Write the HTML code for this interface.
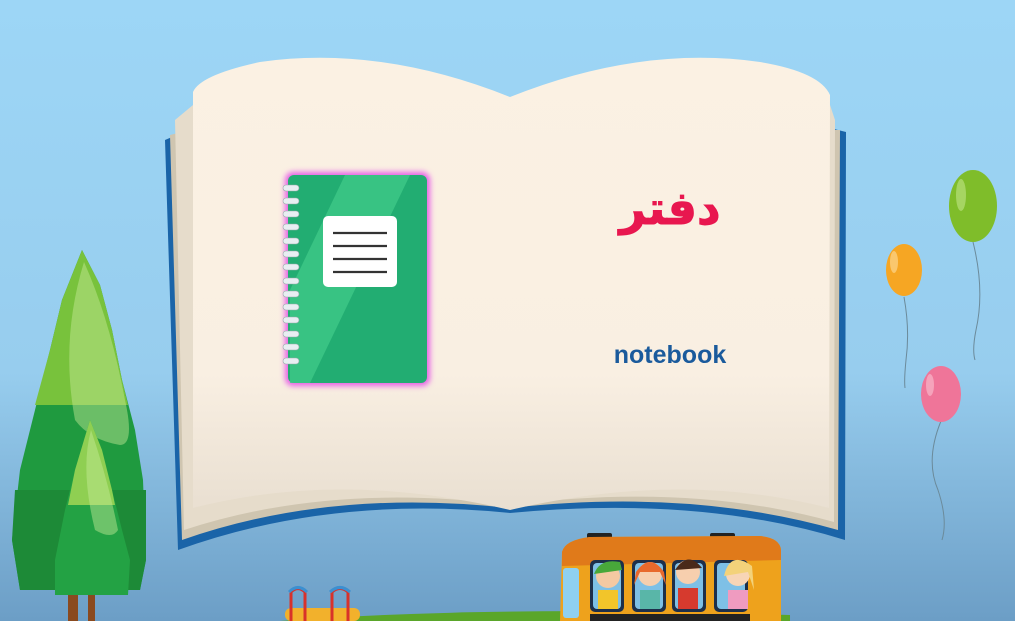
<!DOCTYPE html>
<html><head><meta charset="utf-8"><style>
html,body{margin:0;padding:0;width:1015px;height:621px;overflow:hidden}
svg{display:block}
</style></head><body>
<svg width="1015" height="621" viewBox="0 0 1015 621" xmlns="http://www.w3.org/2000/svg">
<defs>
<linearGradient id="sky" x1="0" y1="0" x2="0" y2="1">
<stop offset="0" stop-color="#9dd6f6"/><stop offset="0.6" stop-color="#97cdee"/><stop offset="1" stop-color="#6c9ec6"/>
</linearGradient>
<linearGradient id="page" x1="0" y1="0" x2="0" y2="1">
<stop offset="0" stop-color="#fbf1e3"/><stop offset="0.7" stop-color="#f9efe2"/><stop offset="1" stop-color="#e9dfd1"/>
</linearGradient>
<filter id="glow" x="-20%" y="-20%" width="140%" height="140%"><feGaussianBlur stdDeviation="3"/></filter>
</defs>
<rect width="1015" height="621" fill="url(#sky)"/>

<path d="M165 140 L193 128 L510 120 L830 128 L846 132 L845 540 Q700 495 510 513 Q330 495 178 550 Z" fill="#1a64a8"/>
<path d="M170 135 L190 130 L830 130 L840 130 L838 530 Q690 488 510 508 Q330 488 182 540 Z" fill="#cfc5b0"/>
<path d="M175 120 L193 105 L830 105 L835 120 L834 522 Q690 482 510 505 Q330 482 184 530 Z" fill="#e6dccb"/>
<path d="M193 92 Q200 75 260 62 Q380 45 510 97 Q640 45 760 62 Q820 72 830 95 L829 508 Q680 470 510 510 Q340 470 193 508 Z" fill="url(#page)"/>

<rect x="285" y="172" width="145" height="214" rx="8" fill="#e65ee6" filter="url(#glow)"/>
<rect x="288" y="175" width="139" height="208" rx="6" fill="#22ad72"/>
<path d="M345 175 L410 175 L310 383 L290 383 L290 290 Z" fill="#3ec887" opacity="0.8"/>
<rect x="323" y="216" width="74" height="71" rx="5" fill="#ffffff"/>
<g stroke="#333" stroke-width="2.2"><line x1="333" y1="233" x2="387" y2="233"/><line x1="333" y1="246" x2="387" y2="246"/><line x1="333" y1="259" x2="387" y2="259"/><line x1="333" y1="272" x2="387" y2="272"/></g>
<g fill="#e8eef2" stroke="#9aa" stroke-width="0.6">
<rect x="283" y="185" width="16" height="6" rx="3"/><rect x="283" y="198" width="16" height="6" rx="3"/><rect x="283" y="211" width="16" height="6" rx="3"/><rect x="283" y="224" width="16" height="6" rx="3"/><rect x="283" y="238" width="16" height="6" rx="3"/><rect x="283" y="251" width="16" height="6" rx="3"/><rect x="283" y="264" width="16" height="6" rx="3"/><rect x="283" y="278" width="16" height="6" rx="3"/><rect x="283" y="291" width="16" height="6" rx="3"/><rect x="283" y="304" width="16" height="6" rx="3"/><rect x="283" y="317" width="16" height="6" rx="3"/><rect x="283" y="331" width="16" height="6" rx="3"/><rect x="283" y="344" width="16" height="6" rx="3"/><rect x="283" y="358" width="16" height="6" rx="3"/>
</g>

<text x="670" y="224" text-anchor="middle" font-family="'DejaVu Sans','Noto Sans CJK SC',sans-serif" font-weight="bold" font-size="46" fill="#e8174f" stroke="#e8174f" stroke-width="1" direction="rtl">دفتر</text>
<text x="670" y="363" text-anchor="middle" font-family="'Liberation Sans',sans-serif" font-weight="bold" font-size="25" fill="#1a5a9c">notebook</text>

<g fill="none" stroke="#6b8a9a" stroke-width="1">
<path d="M973 242 Q985 290 976 330 Q972 350 975 360"/>
<path d="M904 297 Q910 330 906 360 Q904 380 905 388"/>
<path d="M941 421 Q925 460 938 490 Q948 520 942 540"/>
</g>
<ellipse cx="973" cy="206" rx="24" ry="36" fill="#7fbd2a"/>
<ellipse cx="961" cy="195" rx="5" ry="16" fill="#b6e07a" opacity="0.7"/>
<ellipse cx="904" cy="270" rx="18" ry="26" fill="#f6a623"/>
<ellipse cx="894" cy="262" rx="4" ry="11" fill="#fcd58d" opacity="0.7"/>
<ellipse cx="941" cy="394" rx="20" ry="28" fill="#ef7599"/>
<ellipse cx="930" cy="385" rx="4" ry="11" fill="#f8b6c9" opacity="0.7"/>

<path d="M280 621 Q500 605 790 615 L790 621 Z" fill="#5aa62a"/>

<rect x="68" y="585" width="10" height="36" fill="#8a4a1f"/>
<rect x="88" y="585" width="7" height="36" fill="#8a4a1f"/>
<path d="M82 250 L100 285 L112 330 L122 380 L135 430 L143 480 L146 560 L140 590 L20 590 L12 540 L20 470 L35 410 L50 350 L62 300 Z" fill="#1f9a3f"/>
<path d="M82 250 L100 285 L112 330 L122 380 L128 405 L35 405 L50 350 L62 300 Z" fill="#78c23c"/>
<path d="M15 490 L146 490 L146 560 L140 590 L20 590 L12 540 Z" fill="#1d8a37"/>
<path d="M84 262 Q110 320 125 400 Q135 445 120 445 Q90 440 75 420 Q60 340 84 262 Z" fill="#c8ec9a" opacity="0.45"/>
<path d="M90 420 L102 450 L112 490 L122 530 L130 560 L128 595 L55 595 L55 560 L65 510 L75 470 Z" fill="#23a244"/>
<path d="M90 420 L102 450 L112 490 L115 505 L68 505 L75 470 Z" fill="#8fcf52"/>
<path d="M91 430 Q108 480 118 530 Q112 540 95 530 Q80 470 91 430 Z" fill="#c8ec9a" opacity="0.45"/>

<rect x="285" y="608" width="75" height="13" rx="6" fill="#f2b12c"/>
<g fill="none" stroke-width="3"><path d="M291 621 L291 592 Q298 585 305 592 L305 621" stroke="#d8322a"/><path d="M332 621 L332 592 Q340 585 348 592 L348 621" stroke="#d8322a"/></g>
<path d="M289 592 Q298 583 307 592 M330 592 Q340 583 350 592" stroke="#3c8fd0" stroke-width="3" fill="none"/>

<rect x="587" y="533" width="25" height="6" rx="2" fill="#222"/>
<rect x="710" y="533" width="25" height="6" rx="2" fill="#222"/>
<path d="M562 552 Q565 540 590 537 L760 536 Q780 538 781 550 L781 621 L560 621 Z" fill="#eea21c"/>
<path d="M562 552 Q565 540 590 537 L760 536 Q780 538 781 550 L781 560 L562 566 Z" fill="#e07a1a"/>
<rect x="563" y="568" width="16" height="50" rx="3" fill="#8fd0f0"/>
<g fill="#1d2f4a"><rect x="590" y="560" width="34" height="52" rx="5"/><rect x="632" y="560" width="34" height="52" rx="5"/><rect x="672" y="560" width="34" height="52" rx="5"/><rect x="714" y="560" width="34" height="52" rx="5"/></g>
<g><rect x="593" y="563" width="28" height="46" rx="4" fill="#7ec0e6"/><rect x="635" y="563" width="28" height="46" rx="4" fill="#7ec0e6"/><rect x="675" y="563" width="28" height="46" rx="4" fill="#7ec0e6"/><rect x="717" y="563" width="28" height="46" rx="4" fill="#7ec0e6"/></g>
<circle cx="608" cy="576" r="12" fill="#f4c9a2"/><path d="M594 574 Q600 558 620 562 L622 570 Z" fill="#48a83a"/><rect x="598" y="590" width="20" height="19" fill="#f2c52a"/>
<circle cx="650" cy="574" r="12" fill="#f7cfae"/><path d="M636 572 Q650 552 664 572 L666 585 L660 572 L640 572 L634 585 Z" fill="#e8692c"/><rect x="640" y="590" width="20" height="19" fill="#59b6a8"/>
<circle cx="688" cy="572" r="12" fill="#f7cfae"/><path d="M675 570 Q688 550 702 568 Z" fill="#4a2a1a"/><rect x="678" y="588" width="20" height="21" fill="#d63a2e"/>
<circle cx="738" cy="574" r="12" fill="#f7d5b6"/><path d="M724 576 Q730 550 752 566 L754 590 L748 572 Z" fill="#f3d27a"/><rect x="728" y="590" width="20" height="19" fill="#ef9bc0"/>
<rect x="590" y="614" width="160" height="7" fill="#222"/>
</svg>
</body></html>
